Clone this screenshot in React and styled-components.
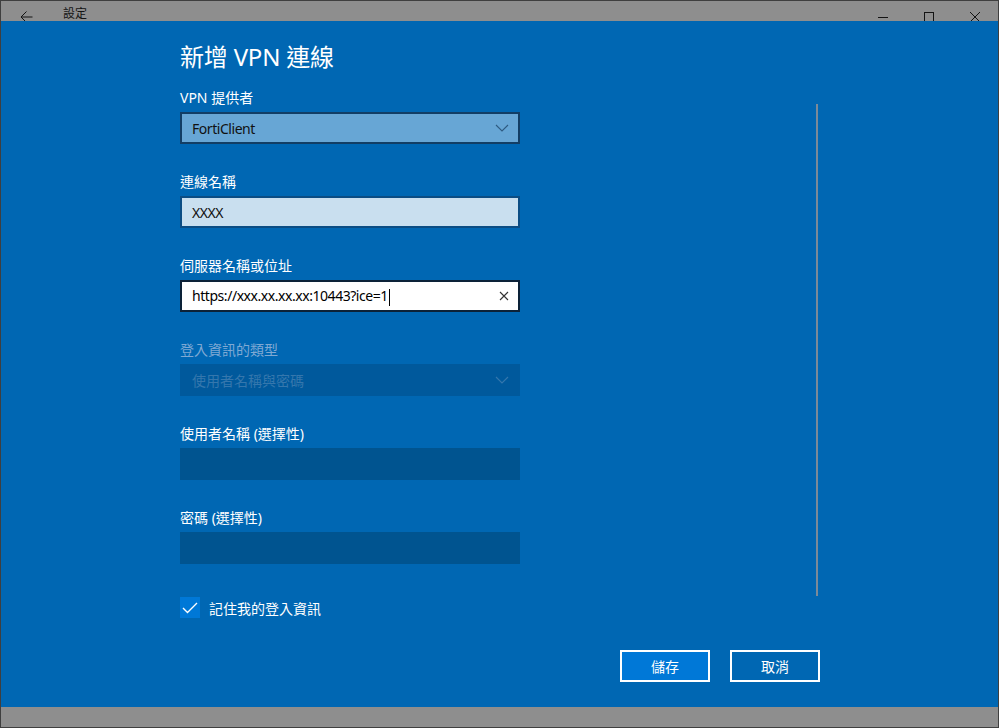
import styled, { createGlobalStyle } from "styled-components";

const GlobalStyle = createGlobalStyle`
  html, body {
    margin: 0;
    padding: 0;
    background: #8e8e8e;
  }
  body {
    font-family: "Segoe UI", "Noto Sans", "Noto Sans CJK TC", sans-serif;
    font-size: 14px;
  }
`;

const Window = styled.div`
  width: 999px;
  height: 728px;
  box-sizing: border-box;
  border: 1px solid #3f3f3f;
  display: flex;
  flex-direction: column;
  background: #8e8e8e;
  overflow: hidden;
`;

const TitleBar = styled.div`
  height: 20px;
  flex: none;
  overflow: hidden;
  background: #8e8e8e;
`;

const TitleRow = styled.div`
  height: 32px;
  display: flex;
  align-items: center;
  color: #141414;
`;

const BackButton = styled.div`
  width: 48px;
  height: 32px;
  display: flex;
  align-items: center;
  justify-content: center;
  margin-left: 1px;
`;

const AppName = styled.span`
  align-self: flex-start;
  margin-top: 5px;
  font-size: 12px;
  line-height: 14px;
  margin-left: 13px;
  font-family: "Noto Sans CJK TC", sans-serif;
`;

const Controls = styled.div`
  margin-left: auto;
  display: flex;
`;

const ControlButton = styled.div`
  width: 46px;
  height: 32px;
  display: flex;
  align-items: center;
  justify-content: center;
`;

const Dialog = styled.div`
  flex: 1;
  background: #0067b3;
  display: flex;
  flex-direction: column;
  color: #fff;
`;

const ScrollArea = styled.div`
  display: flex;
  padding-left: 179px;
`;

const Form = styled.div`
  width: 340px;
  padding-top: 20px;
  display: flex;
  flex-direction: column;
`;

const Heading = styled.h1`
  margin: 0 0 15px;
  font-size: 24px;
  line-height: 32px;
  font-weight: 400;
  letter-spacing: -0.2px;
`;

const Field = styled.div`
  margin-bottom: 28px;
`;

const Label = styled.div`
  font-size: 14px;
  line-height: 20px;
  margin-bottom: 4px;
  color: ${(p) => (p.$disabled ? "#7fa9d3" : "#fff")};
`;

const Box = styled.div`
  height: 32px;
  box-sizing: border-box;
  border: 2px solid ${(p) => p.$border || "transparent"};
  background: ${(p) => p.$bg};
  color: ${(p) => p.$color || "#000"};
  display: flex;
  align-items: center;
  padding: 0 9px 0 10px;
  font-size: 14px;
`;

const BoxText = styled.span`
  flex: 1;
  white-space: nowrap;
  letter-spacing: ${(p) => (p.$latin ? "-0.45px" : "0")};
`;

const Caret = styled.span`
  display: inline-block;
  width: 1px;
  height: 17px;
  background: #000;
  vertical-align: middle;
  margin-left: 1px;
`;

const ScrollBar = styled.div`
  width: 2px;
  height: 492px;
  margin-top: 83px;
  margin-left: 296px;
  background: #7c8a98;
`;

const CheckRow = styled.label`
  display: flex;
  align-items: center;
  gap: 9px;
  margin-top: 5px;
  font-size: 14px;
`;

const CheckBox = styled.span`
  width: 20px;
  height: 21px;
  background: #0078d7;
  display: flex;
  align-items: center;
  justify-content: center;
`;

const Footer = styled.div`
  display: flex;
  gap: 20px;
  padding-left: 619px;
  margin-top: 32px;
`;

const Button = styled.button`
  width: 90px;
  height: 32px;
  box-sizing: border-box;
  border: 2px solid #fff;
  background: ${(p) => (p.$primary ? "#0078d7" : "transparent")};
  color: #fff;
  font-family: "Noto Sans CJK TC", sans-serif;
  font-size: 14px;
  padding: 0;
`;

const BottomStrip = styled.div`
  height: 20px;
  flex: none;
  background: #8e8e8e;
`;

const Chevron = ({ color }) => (
  <svg width="14" height="8" viewBox="0 0 14 8">
    <polyline points="1,1 7,7 13,1" fill="none" stroke={color} strokeWidth="1.1" />
  </svg>
);

export default function App() {
  return (
    <Window>
      <GlobalStyle />
      <TitleBar>
        <TitleRow>
          <BackButton>
            <svg width="13" height="12" viewBox="0 0 13 12">
              <path d="M12.5 6H1M6.5 0.5L1 6l5.5 5.5" fill="none" stroke="#141414" strokeWidth="1" />
            </svg>
          </BackButton>
          <AppName>設定</AppName>
          <Controls>
            <ControlButton>
              <svg width="10" height="10" viewBox="0 0 10 10">
                <path d="M0 5.5h10" stroke="#141414" strokeWidth="1" />
              </svg>
            </ControlButton>
            <ControlButton>
              <svg width="10" height="10" viewBox="0 0 10 10">
                <rect x="0.5" y="0.5" width="9" height="9" fill="none" stroke="#141414" strokeWidth="1" />
              </svg>
            </ControlButton>
            <ControlButton>
              <svg width="10" height="10" viewBox="0 0 10 10">
                <path d="M0 0L10 10M10 0L0 10" stroke="#141414" strokeWidth="1" />
              </svg>
            </ControlButton>
          </Controls>
        </TitleRow>
      </TitleBar>

      <Dialog>
        <ScrollArea>
          <Form>
            <Heading>新增 VPN 連線</Heading>

            <Field>
              <Label>VPN 提供者</Label>
              <Box $bg="#67a6d5" $border="#123e65" $color="#111">
                <BoxText $latin>FortiClient</BoxText>
                <Chevron color="#2e5a80" />
              </Box>
            </Field>

            <Field>
              <Label>連線名稱</Label>
              <Box $bg="#c9dfef" $border="#0b4d84" $color="#111">
                <BoxText $latin>XXXX</BoxText>
              </Box>
            </Field>

            <Field>
              <Label>伺服器名稱或位址</Label>
              <Box $bg="#fff" $border="#0c2238" $color="#000">
                <BoxText $latin>
                  https://xxx.xx.xx.xx:10443?ice=1
                  <Caret />
                </BoxText>
                <svg width="10" height="10" viewBox="0 0 10 10">
                  <path d="M1 1L9 9M9 1L1 9" stroke="#333" strokeWidth="1.1" />
                </svg>
              </Box>
            </Field>

            <Field>
              <Label $disabled>登入資訊的類型</Label>
              <Box $bg="#00599c" $color="#3577ad">
                <BoxText>使用者名稱與密碼</BoxText>
                <Chevron color="#3577ad" />
              </Box>
            </Field>

            <Field>
              <Label>使用者名稱 (選擇性)</Label>
              <Box $bg="#005490" />
            </Field>

            <Field>
              <Label>密碼 (選擇性)</Label>
              <Box $bg="#005490" />
            </Field>

            <CheckRow>
              <CheckBox>
                <svg width="16" height="12" viewBox="0 0 16 12">
                  <polyline points="1,6 5.5,10.5 15,1" fill="none" stroke="#fff" strokeWidth="1.4" />
                </svg>
              </CheckBox>
              記住我的登入資訊
            </CheckRow>
          </Form>
          <ScrollBar />
        </ScrollArea>

        <Footer>
          <Button $primary>儲存</Button>
          <Button>取消</Button>
        </Footer>
      </Dialog>

      <BottomStrip />
    </Window>
  );
}
